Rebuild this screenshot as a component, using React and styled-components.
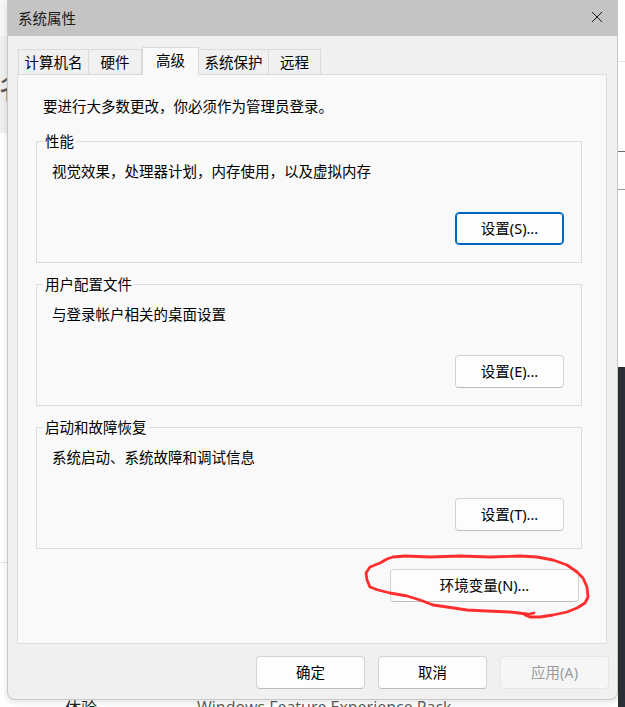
import styled, { createGlobalStyle } from "styled-components";

const GlobalStyle = createGlobalStyle`
  html, body {
    margin: 0;
    padding: 0;
    background: #ffffff;
  }
  body {
    font-family: "Noto Sans", "Noto Sans CJK SC", sans-serif;
    color: #000;
  }
`;

const Desktop = styled.div`
  position: relative;
  width: 625px;
  height: 707px;
  overflow: hidden;
  background: #ffffff;
`;

const TopArea = styled.div`
  display: flex;
  height: 700px;
`;

const Edge = styled.div`
  display: flex;
  flex-direction: column;
  width: 7px;
  flex-shrink: 0;
  overflow: hidden;
`;

const EdgePart = styled.div`
  height: ${(p) => p.h}px;
  flex: ${(p) => (p.h ? "none" : "1")};
  background: ${(p) => p.bg || "#ffffff"};
  border-bottom: ${(p) => (p.line ? `1px solid ${p.line}` : "none")};
  display: flex;
  justify-content: flex-end;
  align-items: center;
  box-sizing: border-box;
`;

const CutGlyph = styled.span`
  font-family: "Noto Sans CJK SC", sans-serif;
  font-size: 30px;
  line-height: 30px;
  color: #5a5a5a;
  margin-right: -22px;
`;

const Dialog = styled.div`
  width: 611px;
  flex-shrink: 0;
  display: flex;
  flex-direction: column;
  background: #f0f0f0;
  border: 1px solid #c8c8c8;
  border-top: none;
  border-radius: 0 0 8px 8px;
  box-sizing: border-box;
  overflow: hidden;
  box-shadow: 0 2px 6px rgba(0, 0, 0, 0.12);
`;

const TitleBar = styled.div`
  height: 36px;
  flex-shrink: 0;
  display: flex;
  align-items: center;
  justify-content: space-between;
  padding: 0 14px 0 10px;
  background: #c4c4c4;
`;

const Title = styled.span`
  font-size: 14.5px;
  line-height: 20px;
  color: #1a1a1a;
  margin-top: -1px;
`;

const CloseBtn = styled.div`
  width: 12px;
  height: 12px;
  display: flex;
  margin-top: -3px;
`;

const Body = styled.div`
  flex: 1;
  display: flex;
  flex-direction: column;
  padding: 11px 8px 11px 9px;
`;

const TabRow = styled.div`
  display: flex;
  align-items: flex-end;
  height: 28px;
  margin-left: 1px;
  margin-bottom: -1px;
  position: relative;
  z-index: 1;
`;

const Tab = styled.div`
  box-sizing: border-box;
  width: ${(p) => p.w}px;
  height: ${(p) => (p.active ? 28 : 26)}px;
  display: flex;
  justify-content: center;
  align-items: ${(p) => (p.active ? "flex-start" : "center")};
  padding-top: ${(p) => (p.active ? 2 : 0)}px;
  font-size: 14.5px;
  line-height: 20px;
  background: ${(p) => (p.active ? "#f9f9f9" : "#f0f0f0")};
  border: 1px solid #dadada;
  border-bottom: ${(p) => (p.active ? "none" : "1px solid #dadada")};
  border-left: ${(p) => (p.first || p.active ? "1px solid #dadada" : "none")};
`;

const Panel = styled.div`
  width: 590px;
  height: 570px;
  box-sizing: border-box;
  background: #f9f9f9;
  border: 1px solid #dedede;
  padding: 21px 0 0 18px;
  display: flex;
  flex-direction: column;
`;

const Intro = styled.div`
  font-size: 14.5px;
  line-height: 20px;
  margin: 0 0 15px 7px;
`;

const Group = styled.fieldset`
  width: 546px;
  box-sizing: border-box;
  margin: 0 0 11px 0;
  padding: 10px 17px 17px 15px;
  border: 1px solid #dcdcdc;
  min-width: 0;
`;

const Legend = styled.legend`
  font-size: 14.5px;
  line-height: 20px;
  padding: 0 2px;
  margin-left: -9px;
  color: #000;
`;

const Desc = styled.div`
  font-size: 14.5px;
  line-height: 20px;
`;

const ButtonRow = styled.div`
  display: flex;
  justify-content: flex-end;
  width: ${(p) => (p.w ? `${p.w}px` : "auto")};
  box-sizing: border-box;
  margin-top: ${(p) => p.mt || 0}px;
  padding-right: ${(p) => p.pr || 0}px;
`;

const Button = styled.button`
  width: ${(p) => p.w || 109}px;
  height: 33px;
  box-sizing: border-box;
  font-family: "Noto Sans", "Noto Sans CJK SC", sans-serif;
  font-size: 14.5px;
  line-height: 20px;
  padding: 0 0 1px;
  border-radius: 4px;
  background: ${(p) => (p.disabled ? "#f6f6f6" : "#fdfdfd")};
  color: ${(p) => (p.disabled ? "#9a9a9a" : "#000")};
  border: 1px solid
    ${(p) => (p.focused ? "#0067c0" : p.disabled ? "#e6e6e6" : "#d3d3d3")};
  border-bottom-color: ${(p) =>
    p.focused ? "#0067c0" : p.disabled ? "#e6e6e6" : "#bdbdbd"};
  box-shadow: ${(p) => (p.focused ? "inset 0 0 0 1px #0067c0" : "none")};
`;

const Footer = styled.div`
  display: flex;
  justify-content: flex-end;
  gap: 13px;
  margin-top: 12px;
`;

const BehindRow = styled.div`
  display: flex;
  height: 7px;
  overflow: hidden;
  background: #ffffff;
`;

const BehindText = styled.span`
  font-family: ${(p) =>
    p.cjk ? '"Noto Sans CJK SC", sans-serif' : '"Open Sans", sans-serif'};
  font-size: 16px;
  line-height: 16px;
  color: ${(p) => p.color};
  margin-left: ${(p) => p.ml}px;
  margin-top: -1px;
  white-space: nowrap;
`;

const BehindDark = styled.div`
  margin-left: auto;
  width: 7px;
  background: #2b2f36;
`;

const Scribble = styled.svg`
  position: absolute;
  left: 0;
  top: 0;
  pointer-events: none;
`;

const scribble =
  "M527,614 L510,612 L487,611 L467,610 L447,607 L433,605 L420,600 L407,596 L390,593 L378,590 L370,587 L367,580 L366,573 L370,567 L375,565 L380,563 L387,559 L393,557 L405,556 L430,557 L460,556 L490,557 L520,556 L537,557 L553,560 L567,565 L577,572 L583,578 L587,587 L588,597 L585,603 L577,608 L567,612 L553,615 L540,617 L530,617 L525,615 L534,613";

const groups = [
  { title: "性能", desc: "视觉效果，处理器计划，内存使用，以及虚拟内存", btn: "设置(S)...", focused: true },
  { title: "用户配置文件", desc: "与登录帐户相关的桌面设置", btn: "设置(E)..." },
  { title: "启动和故障恢复", desc: "系统启动、系统故障和调试信息", btn: "设置(T)..." },
];

const tabs = [
  { label: "计算机名", w: 71 },
  { label: "硬件", w: 53 },
  { label: "高级", w: 57, active: true },
  { label: "系统保护", w: 70 },
  { label: "远程", w: 52 },
];

export default function App() {
  return (
    <Desktop>
      <GlobalStyle />
      <TopArea>
        <Edge>
          <EdgePart h={36} bg="#f7f7f7" />
          <EdgePart h={97} bg="#efefef">
            <CutGlyph>名</CutGlyph>
          </EdgePart>
          <EdgePart h={430} line="#e2e2e2" />
          <EdgePart />
        </Edge>
        <Dialog>
          <TitleBar>
            <Title>系统属性</Title>
            <CloseBtn>
              <svg width="12" height="12" viewBox="0 0 12 12">
                <path d="M1 1 L11 11 M11 1 L1 11" stroke="#1a1a1a" strokeWidth="1" />
              </svg>
            </CloseBtn>
          </TitleBar>
          <Body>
            <TabRow>
              {tabs.map((t, i) => (
                <Tab key={t.label} w={t.w} active={t.active} first={i === 0}>
                  {t.label}
                </Tab>
              ))}
            </TabRow>
            <Panel>
              <Intro>要进行大多数更改，你必须作为管理员登录。</Intro>
              {groups.map((g) => (
                <Group key={g.title}>
                  <Legend>{g.title}</Legend>
                  <Desc>{g.desc}</Desc>
                  <ButtonRow mt={31}>
                    <Button focused={g.focused}>{g.btn}</Button>
                  </ButtonRow>
                </Group>
              ))}
              <ButtonRow mt={9} pr={3} w={546}>
                <Button w={189}>环境变量(N)...</Button>
              </ButtonRow>
            </Panel>
            <Footer>
              <Button>确定</Button>
              <Button>取消</Button>
              <Button disabled>应用(A)</Button>
            </Footer>
          </Body>
        </Dialog>
        <Edge>
          <EdgePart h={62} line="#e4e4e4" />
          <EdgePart h={90} line="#6a6a6a" />
          <EdgePart h={38} line="#9a9a9a" />
          <EdgePart h={177} />
          <EdgePart bg="#2b2f36" />
        </Edge>
      </TopArea>
      <BehindRow>
        <BehindText cjk ml={65} color="#222">体验</BehindText>
        <BehindText ml={100} color="#555">Windows Feature Experience Pack</BehindText>
        <BehindDark />
      </BehindRow>
      <Scribble width="625" height="707" viewBox="0 0 625 707">
        <path
          d={scribble}
          fill="none"
          stroke="#ff2e2e"
          strokeWidth="2.8"
          strokeLinejoin="round"
          strokeLinecap="round"
        />
      </Scribble>
    </Desktop>
  );
}
